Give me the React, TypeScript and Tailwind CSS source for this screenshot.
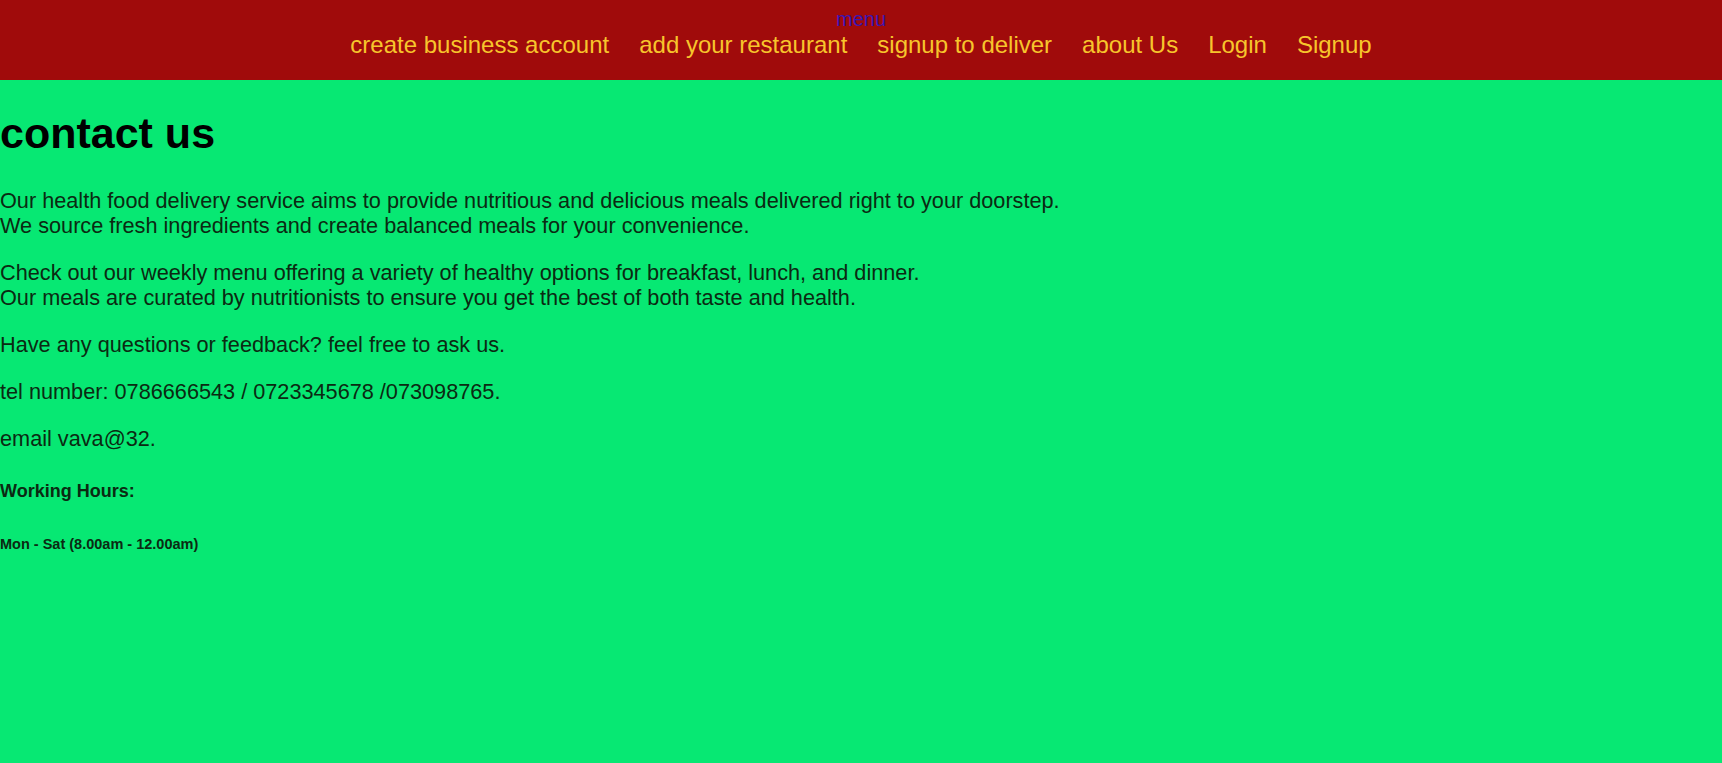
import React from 'react';

const navLinks = [
  'create business account',
  'add your restaurant',
  'signup to deliver',
  'about Us',
  'Login',
  'Signup',
];

const App: React.FC = () => {
  return (
    <div className="min-h-[763px] bg-[#07e873] text-black font-['Liberation_Sans',Arial,sans-serif]">
      {/* header */}
      <header className="bg-[#a00b0b] h-[80px] pt-[8px] flex flex-col items-center">
        <div className="text-[20px] leading-[23px] text-[#3a16b4]">menu</div>
        <nav className="flex gap-[30px] text-[24px] leading-[28px] text-[#f7c52c]">
          {navLinks.map((link) => (
            <span key={link}>{link}</span>
          ))}
        </nav>
      </header>

      <main>
        <h1 className="mt-[29px] text-[43px] leading-[49px] font-bold">contact us</h1>

        <div className="text-[21.7px] leading-[25px] text-[#0b2a12]">
          <p className="mt-[30px]">
            Our health food delivery service aims to provide nutritious and delicious meals delivered right to your doorstep.
            <br />
            We source fresh ingredients and create balanced meals for your convenience.
          </p>
          <p className="mt-[22px]">
            Check out our weekly menu offering a variety of healthy options for breakfast, lunch, and dinner.
            <br />
            Our meals are curated by nutritionists to ensure you get the best of both taste and health.
          </p>
          <p className="mt-[22px]">Have any questions or feedback? feel free to ask us.</p>
          <p className="mt-[22px]">tel number: 0786666543 / 0723345678 /073098765.</p>
          <p className="mt-[22px]">email vava@32.</p>
        </div>

        <h4 className="mt-[30px] text-[18px] leading-[21px] font-bold text-[#0b2a12]">Working Hours:</h4>
        <h6 className="mt-[34px] text-[14.5px] leading-[17px] font-bold text-[#0b2a12]">Mon - Sat (8.00am - 12.00am)</h6>
      </main>
    </div>
  );
};

export default App;
